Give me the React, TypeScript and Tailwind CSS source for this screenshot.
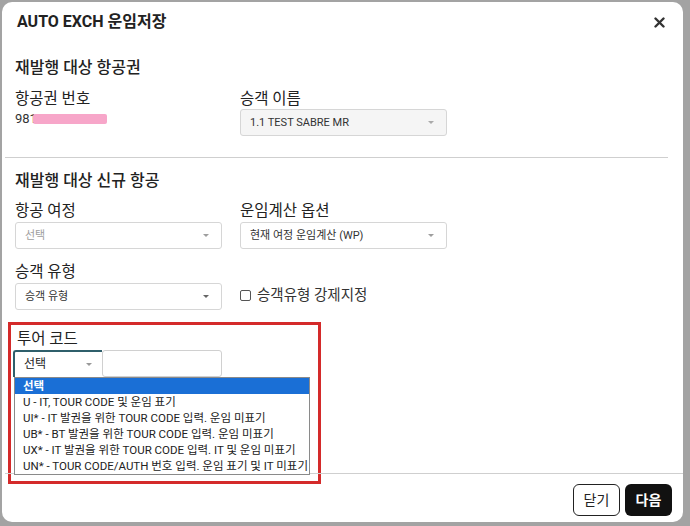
import React from "react";

const font = { fontFamily: 'Roboto, "Noto Sans CJK KR", sans-serif' };

function Caret({ color = "#9e9e9e" }: { color?: string }) {
  return (
    <svg width="8" height="5" viewBox="0 0 8 5" className="shrink-0">
      <path d="M1 1 L7 1 L4 4 Z" fill={color} />
    </svg>
  );
}

function Select({
  text,
  w,
  textColor = "text-[#333]",
  bg = "bg-white",
  caret = "#9e9e9e",
}: {
  text: string;
  w: string;
  textColor?: string;
  bg?: string;
  caret?: string;
}) {
  return (
    <div
      className={`${w} h-[27px] ${bg} border border-[#d6d6d6] rounded-[3px] flex items-center justify-between pl-[9px] pr-[11px]`}
    >
      <span className={`text-[11px] ${textColor} leading-none`}>{text}</span>
      <Caret color={caret} />
    </div>
  );
}

const items = [
  "U - IT, TOUR CODE 및 운임 표기",
  "UI* - IT 발권을 위한 TOUR CODE 입력. 운임 미표기",
  "UB* - BT 발권을 위한 TOUR CODE 입력. 운임 미표기",
  "UX* - IT 발권을 위한 TOUR CODE 입력. IT 및 운임 미표기",
  "UN* - TOUR CODE/AUTH 번호 입력. 운임 표기 및 IT 미표기",
];

export default function App() {
  return (
    <div className="w-[690px] h-[526px] bg-[#a3a3a3] pt-[2px] pl-[2px] overflow-hidden" style={font}>
      <div className="relative w-[681px] h-[520px] bg-white rounded-[10px] flex flex-col text-[#222]">
        {/* header */}
        <div className="h-[42px] flex items-center justify-between pl-[15px] pr-[18px]">
          <div className="text-[16px] font-bold text-[#222]">AUTO EXCH 운임저장</div>
          <svg width="11" height="11" viewBox="0 0 11 11" className="mt-[1px]">
            <path d="M1.5 1.5 L9.5 9.5 M9.5 1.5 L1.5 9.5" stroke="#333" strokeWidth="2.4" strokeLinecap="round" />
          </svg>
        </div>

        {/* section 1 */}
        <div className="px-[13px] pt-[17px]">
          <div className="text-[16px] font-medium leading-none h-[20px]">재발행 대상 항공권</div>
          <div className="flex mt-[12px]">
            <div className="w-[225px]">
              <div className="text-[15.5px] leading-none h-[18px]">항공권 번호</div>
              <div className="flex items-center mt-[2px] h-[14px]">
                <span className="text-[13px] text-[#333] leading-none">981</span>
                <div className="w-[74px] h-[10px] bg-[#f7a6c9] ml-[-4px] rounded-[2px]" />
              </div>
            </div>
            <div>
              <div className="text-[15.5px] leading-none h-[18px]">승객 이름</div>
              <div className="mt-[-1px]">
                <Select text="1.1 TEST SABRE MR" w="w-[207px]" bg="bg-[#f5f5f5]" textColor="text-[#333]" caret="#aaa" />
              </div>
            </div>
          </div>
        </div>

        <div className="h-px bg-[#cfcfcf] ml-[3px] mr-[15px] mt-[21px]" />

        {/* section 2 */}
        <div className="px-[13px] pt-[15px]">
          <div className="text-[16px] font-medium leading-none h-[20px]">재발행 대상 신규 항공</div>
          <div className="flex mt-[11px]">
            <div className="w-[225px]">
              <div className="text-[15.5px] leading-none h-[18px]">항공 여정</div>
              <Select text="선택" w="w-[207px]" textColor="text-[#9e9e9e]" />
            </div>
            <div>
              <div className="text-[15.5px] leading-none h-[18px]">운임계산 옵션</div>
              <Select text="현재 여정 운임계산 (WP)" w="w-[207px]" />
            </div>
          </div>
          <div className="flex mt-[16px]">
            <div className="w-[225px]">
              <div className="text-[15.5px] leading-none h-[18px]">승객 유형</div>
              <Select text="승객 유형" w="w-[207px]" caret="#666" />
            </div>
            <div className="flex items-center pt-[17px]">
              <div className="w-[11px] h-[11px] border border-[#555] rounded-[2px] mr-[6px]" />
              <span className="text-[14.5px] text-[#333]">승객유형 강제지정</span>
            </div>
          </div>
        </div>

        {/* tour code */}
        <div className="ml-[6px] mt-[12px] w-[313px] h-[166px] border-[3px] border-[#d42a2a] relative">
          <div className="pl-[6px] pt-[7px]">
            <div className="text-[15.5px] leading-none h-[18px]">투어 코드</div>
            <div className="flex ml-[-4px]">
              <div className="w-[89px] h-[27px] border-l-[2px] border-t-[2px] border-[#2f5f6b] rounded-tl-[3px] flex items-center justify-between pl-[9px] pr-[9px]">
                <span className="text-[12px] text-[#222] leading-none">선택</span>
                <Caret color="#999" />
              </div>
              <div className="w-[120px] h-[27px] border border-[#d0d0d0] rounded-[3px]" />
            </div>
          </div>
          <div className="absolute left-[3px] top-[52px] w-[296px] border border-[#8a8a8a] bg-white z-10">
            <div className="h-[16px] bg-[#1a6fd6] text-white text-[11.5px] font-bold leading-[16px] pl-[8px]">선택</div>
            {items.map((t) => (
              <div key={t} className="h-[16px] text-[11.5px] text-[#222] leading-[16px] pl-[8px] whitespace-nowrap">
                {t}
              </div>
            ))}
          </div>
        </div>

        <div className="flex-1" />
        <div className="h-px bg-[#cfcfcf] absolute left-[3px] right-0 top-[471px]" />

        {/* footer */}
        <div className="flex justify-end gap-[5px] pr-[11px] pb-[6px]">
          <button className="w-[47px] h-[32px] border border-[#222] rounded-[6px] text-[14px] text-[#222] bg-white">
            닫기
          </button>
          <button className="w-[47px] h-[32px] rounded-[6px] text-[14px] font-bold text-white bg-[#111]">
            다음
          </button>
        </div>
      </div>
    </div>
  );
}
